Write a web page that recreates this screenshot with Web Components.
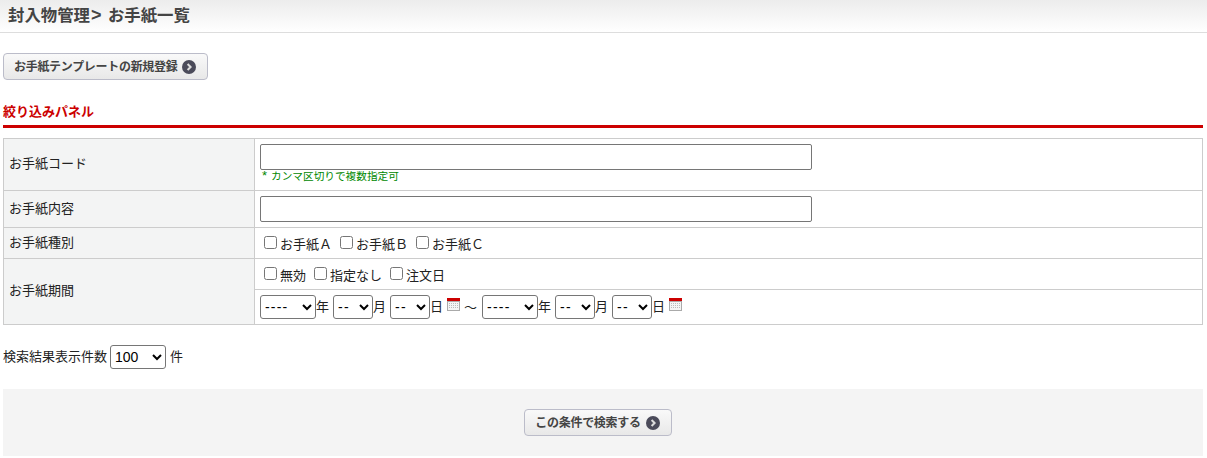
<!DOCTYPE html>
<html lang="ja">
<head>
<meta charset="utf-8">
<title>お手紙一覧</title>
<style>
  body {
    margin: 0;
    background: #fff;
    color: #222;
    font: 13px "Liberation Sans", "Noto Sans CJK JP", sans-serif;
  }
</style>
</head>
<body>
<letter-list-page></letter-list-page>

<script>
const define = (name, css, html) => {
  customElements.define(name, class extends HTMLElement {
    constructor() {
      super();
      this.attachShadow({ mode: "open" }).innerHTML = `<style>${css}</style>${html(this)}`;
    }
  });
};

define("page-title", `
  :host { display: block; height: 32px; padding-left: 8px; line-height: 31px;
    background: linear-gradient(#ececec, #fff); border-bottom: 1px solid #ddd;
    font-size: 16.4px; font-weight: bold; color: #444; }
  .sep { display: inline-block; width: 18px; padding-left: 1px; box-sizing: border-box; font-size: 18px; line-height: 20px; }
`, (el) => `<slot></slot><span class="sep">&gt;</span><slot name="current"></slot>`);

define("go-button", `
  :host { display: flex; width: fit-content; align-items: center; gap: 5px; box-sizing: border-box; height: 27px;
    padding: 0 11px 0 10px; border: 1px solid #bbbcc9; border-radius: 4px;
    background: linear-gradient(#f9f9f9, #e8e8e8); white-space: nowrap;
    font-size: 12px; font-weight: bold; letter-spacing: -.3px; color: #444; }
  .text { position: relative; top: -1px; }
  svg { width: 14px; height: 14px; flex: none; }
`, () => `<span class="text"><slot></slot></span>
  <svg viewBox="0 0 14 14"><circle cx="7" cy="7" r="7" fill="#4b4b5a"/><path d="M5.6 4 8.6 7l-3 3" fill="none" stroke="#ddd" stroke-width="2"/></svg>`);

define("panel-heading", `
  :host { display: block; height: 25px; line-height: 23px;
    border-bottom: 3px solid #c00; font-size: 13px; font-weight: bold; color: #c00; }
`, () => `<slot></slot>`);

define("filter-table", `
  :host { display: block; border: 1px solid #ccc; border-bottom: 0; }
`, () => `<slot></slot>`);

define("filter-row", `
  :host { display: grid; grid-template-columns: 251px 1fr; border-bottom: 1px solid #ccc; }
  .label { display: flex; align-items: center; padding: 0 5px; background: #f3f4f4; border-right: 1px solid #ccc; }
  .label span { position: relative; top: -2px; }
  .body { display: flex; flex-direction: column; min-width: 0; }
`, (el) => `<div class="label"><span>${el.getAttribute("label")}</span></div><div class="body"><slot></slot></div>`);

define("filter-cell", `
  :host { display: block; padding: 5px 5px 0; }
  :host([divided]) { border-top: 1px solid #ccc; }
`, () => `<slot></slot>`);

define("text-field", `
  :host { display: block; }
  input { display: block; box-sizing: border-box; width: 552px; height: 26px; margin: 0;
    border: 1px solid #767676; border-radius: 2px; background: #fff; }
`, () => `<input type="text">`);

define("field-note", `
  :host { display: block; height: 20px; padding-left: 2px; line-height: 13px; font-size: 10.67px; color: #080; }
  .mark { display: inline-block; width: 9px; font-size: 13px; line-height: 12px; }
`, () => `<span class="mark">*</span><slot></slot>`);

define("check-list", `
  :host { display: flex; gap: 8px; height: 25px; align-items: center; padding-left: 4px; }
  label { display: inline-flex; align-items: center; gap: 3px; }
  input { width: 13px; height: 13px; margin: 0; position: relative; top: -1px; }
`, (el) => el.getAttribute("items").split(",").map((t) => `<label><input type="checkbox">${t}</label>`).join(""));

define("drop-select", `
  :host { display: inline-block; vertical-align: middle; }
  select { display: block; box-sizing: border-box; height: 24px; margin: 0; border: 1px solid #767676; border-radius: 3px;
    background: #fff; color: #000; font: 14px "Liberation Sans", sans-serif; }
  select.dash { letter-spacing: 1.2px; }
`, (el) => {
  const value = el.getAttribute("value");
  const cls = value.startsWith("-") ? "dash" : "";
  return `<select class="${cls}" style="width:${el.getAttribute("width")}px"><option>${value}</option></select>`;
});

define("calendar-icon", `
  :host { display: inline-block; width: 13px; height: 13px; }
  svg { display: block; }
`, () => `<svg width="13" height="13" viewBox="0 0 13 13">
  <rect width="13" height="13" fill="#d8d8d8"/>
  <rect x=".5" y="3.5" width="12" height="9" fill="#f4f4f4" stroke="#aaa"/>
  <rect width="13" height="3" fill="#c00"/>
  <path d="M2 5.5h9M2 7.5h9M2 9.5h9" stroke="#bbb" stroke-dasharray="1 1"/>
</svg>`);

define("date-part", `
  :host { display: inline-flex; align-items: center; height: 24px; }
  span { margin-left: 1px; position: relative; top: -2px; left: -1px; }
`, (el) => `<drop-select width="${el.getAttribute("width")}" value="${el.getAttribute("value")}"></drop-select><span>${el.getAttribute("unit")}</span>`);

define("date-range", `
  :host { display: flex; align-items: center; height: 34px; gap: 3px; }
  calendar-icon { position: relative; top: -2.5px; }
  .tilde { margin: 0 2px 0 1px; position: relative; top: -1px; }
`, () => {
  const side = `<date-part width="56" value="----" unit="年"></date-part>
    <date-part width="40" value="--" unit="月"></date-part>
    <date-part width="40" value="--" unit="日"></date-part>
    <calendar-icon></calendar-icon>`;
  return `${side}<span class="tilde">～</span>${side}`;
});

define("result-count", `
  :host { display: flex; align-items: center; gap: 3px; height: 24px; }
  .label, span { position: relative; top: -2px; }
  span { margin-left: 1px; }
`, () => `<div class="label"><slot></slot></div><drop-select width="56" value="100"></drop-select><span>件</span>`);

define("search-footer", `
  :host { display: flex; justify-content: center; height: 67px; padding: 20px 10px 0 0; box-sizing: border-box; background: #f4f4f4; }
`, () => `<slot></slot>`);

define("letter-list-page", `
  :host { display: block; }
  main { padding: 20px 4px 0 3px; }
  .search { padding: 0 11px 0 10px; }
  panel-heading { margin-top: 20px; }
  filter-table { margin-top: 10px; }
  result-count { margin-top: 20px; }
  search-footer { margin-top: 20px; }
`, () => `
  <page-title>封入物管理<span slot="current">お手紙一覧</span></page-title>
  <main>
    <go-button>お手紙テンプレートの新規登録</go-button>
    <panel-heading>絞り込みパネル</panel-heading>
    <filter-table>
      <filter-row label="お手紙コード">
        <filter-cell><text-field></text-field><field-note>カンマ区切りで複数指定可</field-note></filter-cell>
      </filter-row>
      <filter-row label="お手紙内容">
        <filter-cell style="height:31px"><text-field></text-field></filter-cell>
      </filter-row>
      <filter-row label="お手紙種別">
        <filter-cell style="padding-top:3px;height:27px"><check-list items="お手紙Ａ,お手紙Ｂ,お手紙Ｃ"></check-list></filter-cell>
      </filter-row>
      <filter-row label="お手紙期間">
        <filter-cell style="padding-top:3px;height:27px"><check-list items="無効,指定なし,注文日"></check-list></filter-cell>
        <filter-cell divided style="padding-top:0"><date-range></date-range></filter-cell>
      </filter-row>
    </filter-table>
    <result-count>検索結果表示件数</result-count>
    <search-footer><go-button class="search">この条件で検索する</go-button></search-footer>
  </main>
`);
</script>
</body>
</html>
